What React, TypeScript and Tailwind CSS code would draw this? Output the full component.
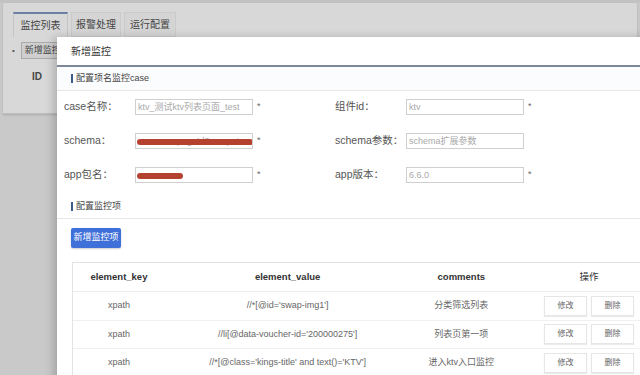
import React from "react";

const font = { fontFamily: '"Liberation Sans", "Noto Sans CJK SC", sans-serif' };

function Field({ label, value, red, star = true, redW = 0 }: { label: string; value: string; red?: boolean; star?: boolean; redW?: number }) {
  return (
    <div className="flex items-center h-[16px]">
      <div className="w-[71px] text-[10.5px] text-[#555] whitespace-nowrap">{label}</div>
      <div className="relative w-[118px] h-[16px] border border-[#cfcfcf] bg-white text-[9px] text-[#aaa] leading-[14px] px-[2px] overflow-hidden whitespace-nowrap">
        {value}
        {red && (
          <div className="absolute left-[1px] top-[5px] h-[6px] bg-[#b5412f] rounded-full" style={{ width: redW }} />
        )}
      </div>
      {star && <div className="ml-[4px] text-[9px] text-[#666]">*</div>}
    </div>
  );
}

function SectionTitle({ text }: { text: string }) {
  return (
    <div className="flex items-center h-[24px] border-b border-[#e6e6e6] pl-[14px]">
      <div className="w-[2px] h-[9px] bg-[#3d5a8a] mr-[3px]" />
      <span className="text-[9px] text-[#444]">{text}</span>
    </div>
  );
}

const rows = [
  ["xpath", "//*[@id='swap-img1']", "分类筛选列表"],
  ["xpath", "//li[@data-voucher-id='200000275']", "列表页第一项"],
  ["xpath", "//*[@class='kings-title' and text()='KTV']", "进入ktv入口监控"],
];

export default function App() {
  return (
    <div className="relative w-[640px] h-[375px] overflow-hidden bg-[#c9c9c9]" style={font}>
      {/* background page */}
      <div className="h-[3px] bg-[#c2c2c2]" />
      <div className="mx-[3px] h-[111px] bg-[#d8d8d8] border-b border-[#bdbdbd] shadow-[0_1px_2px_rgba(0,0,0,0.15)]">
        <div className="flex pt-[9px] pl-[10px] gap-[3px]">
          <div className="h-[25px] w-[55px] border-t-2 border-t-[#6b7fa3] border-x border-[#c4c4c4] flex items-center justify-center text-[10px] text-[#444]">监控列表</div>
          <div className="h-[25px] w-[50px] border border-[#cacaca] bg-[#d4d4d4] flex items-center justify-center text-[10px] text-[#444]">报警处理</div>
          <div className="h-[25px] w-[52px] border border-[#cacaca] bg-[#d4d4d4] flex items-center justify-center text-[10px] text-[#444]">运行配置</div>
        </div>
        <div className="flex items-center pl-[9px] pt-[5px]">
          <span className="text-[8px] text-[#555] mr-[6px]">•</span>
          <div className="h-[17px] w-[40px] border border-[#aaa] bg-[#cfcfcf] text-[9px] text-[#444] leading-[15px] pl-[3px] overflow-hidden whitespace-nowrap">新增监控</div>
        </div>
        <div className="pl-[29px] pt-[10px] text-[10px] font-bold text-[#444]">ID</div>
      </div>

      {/* modal */}
      <div className="absolute left-[57px] top-[37px] w-[600px] h-[360px] bg-white shadow-[-4px_0_8px_rgba(0,0,0,0.18)]">
        <div className="h-[30px] flex items-center pl-[14px] text-[10px] text-[#333] border-b-2 border-[#7d8899]">新增监控</div>
        <div className="bg-[#fbfcfe]">
          <SectionTitle text="配置项名监控case" />
        </div>
        <div className="flex pl-[7px] pt-[8px]">
          <div className="flex flex-col gap-[18px] w-[271px]">
            <Field label="case名称：" value="ktv_测试ktv列表页面_test" />
            <Field label="schema：" value="-------------pageId?comput" red redW={116} />
            <Field label="app包名：" value="" red redW={46} />
          </div>
          <div className="flex flex-col gap-[18px]">
            <Field label="组件id：" value="ktv" />
            <Field label="schema参数：" value="schema扩展参数" star={false} />
            <Field label="app版本：" value="6.6.0" />
          </div>
        </div>
        <div className="mt-[12px]">
          <SectionTitle text="配置监控项" />
        </div>
        <div className="pl-[14px] pt-[9px]">
          <div className="w-[50px] h-[20px] bg-[#3f6fd9] rounded-[2px] text-white text-[9px] flex items-center justify-center shadow-[0_1px_2px_rgba(0,0,0,0.2)]">新增监控项</div>
        </div>
        <div className="ml-[15px] mt-[14px] w-[594px] border border-[#e3e3e3] border-r-0">
          <div className="flex h-[29px] items-center text-[9.5px] font-bold text-[#333] border-b border-[#ececec]">
            <div className="w-[92px] text-center">element_key</div>
            <div className="w-[246px] text-center">element_value</div>
            <div className="w-[102px] text-center">comments</div>
            <div className="w-[154px] text-center font-normal">操作</div>
          </div>
          {rows.map((r, i) => (
            <div key={i} className="flex h-[28.5px] items-center text-[9px] text-[#666] border-b border-[#f0f0f0]">
              <div className="w-[92px] text-center">{r[0]}</div>
              <div className="w-[246px] text-center whitespace-nowrap">{r[1]}</div>
              <div className="w-[102px] text-center whitespace-nowrap">{r[2]}</div>
              <div className="w-[154px] flex justify-center gap-[4px]">
                <div className="w-[43px] h-[20px] border border-[#e6e6e6] bg-white text-[8px] text-[#666] flex items-center justify-center shadow-[0_1px_1px_rgba(0,0,0,0.08)]">修改</div>
                <div className="w-[43px] h-[20px] border border-[#e6e6e6] bg-white text-[8px] text-[#666] flex items-center justify-center shadow-[0_1px_1px_rgba(0,0,0,0.08)]">删除</div>
              </div>
            </div>
          ))}
        </div>
      </div>
    </div>
  );
}
